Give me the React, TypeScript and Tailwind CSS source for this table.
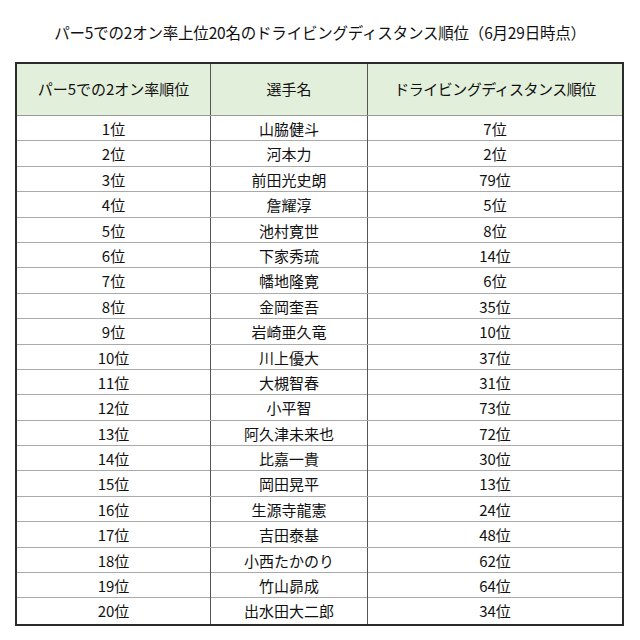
const rows: [string, string, string][] = [
  ['1位', '山脇健斗', '7位'],
  ['2位', '河本力', '2位'],
  ['3位', '前田光史朗', '79位'],
  ['4位', '詹耀淳', '5位'],
  ['5位', '池村寛世', '8位'],
  ['6位', '下家秀琉', '14位'],
  ['7位', '幡地隆寛', '6位'],
  ['8位', '金岡奎吾', '35位'],
  ['9位', '岩崎亜久竜', '10位'],
  ['10位', '川上優大', '37位'],
  ['11位', '大槻智春', '31位'],
  ['12位', '小平智', '73位'],
  ['13位', '阿久津未来也', '72位'],
  ['14位', '比嘉一貴', '30位'],
  ['15位', '岡田晃平', '13位'],
  ['16位', '生源寺龍憲', '24位'],
  ['17位', '吉田泰基', '48位'],
  ['18位', '小西たかのり', '62位'],
  ['19位', '竹山昴成', '64位'],
  ['20位', '出水田大二郎', '34位'],
]

export default function App() {
  return (
    <div
      className="w-[640px] h-[640px] bg-white text-[#111] pt-[21px]"
      style={{ fontFamily: '"Noto Sans CJK JP", "Noto Sans", sans-serif' }}
    >
      <h1 className="text-center text-[15.5px] leading-[22px] tracking-[-0.2px]">
        パー5での2オン率上位20名のドライビングディスタンス順位（6月29日時点）
      </h1>
      <div className="ml-[15px] mt-[19px] w-[609px] border-2 border-[#2b2b2b]">
        <div className="grid grid-cols-[194px_157px_1fr] bg-[#e2efda] h-[52px] border-b border-[#999] text-[15px]">
          <div className="flex items-center justify-center border-r border-[#555]">パー5での2オン率順位</div>
          <div className="flex items-center justify-center border-r border-[#555]">選手名</div>
          <div className="flex items-center justify-center tracking-[-0.5px]">ドライビングディスタンス順位</div>
        </div>
        {rows.map((r, i) => (
          <div
            key={r[0]}
            className={`grid grid-cols-[194px_157px_1fr] h-[25.4px] text-[15px] leading-[25px] ${i < rows.length - 1 ? 'border-b border-[#aaa]' : ''}`}
          >
            <div className="text-center border-r border-[#555]">{r[0]}</div>
            <div className="text-center border-r border-[#555]">{r[1]}</div>
            <div className="text-center">{r[2]}</div>
          </div>
        ))}
      </div>
    </div>
  )
}
